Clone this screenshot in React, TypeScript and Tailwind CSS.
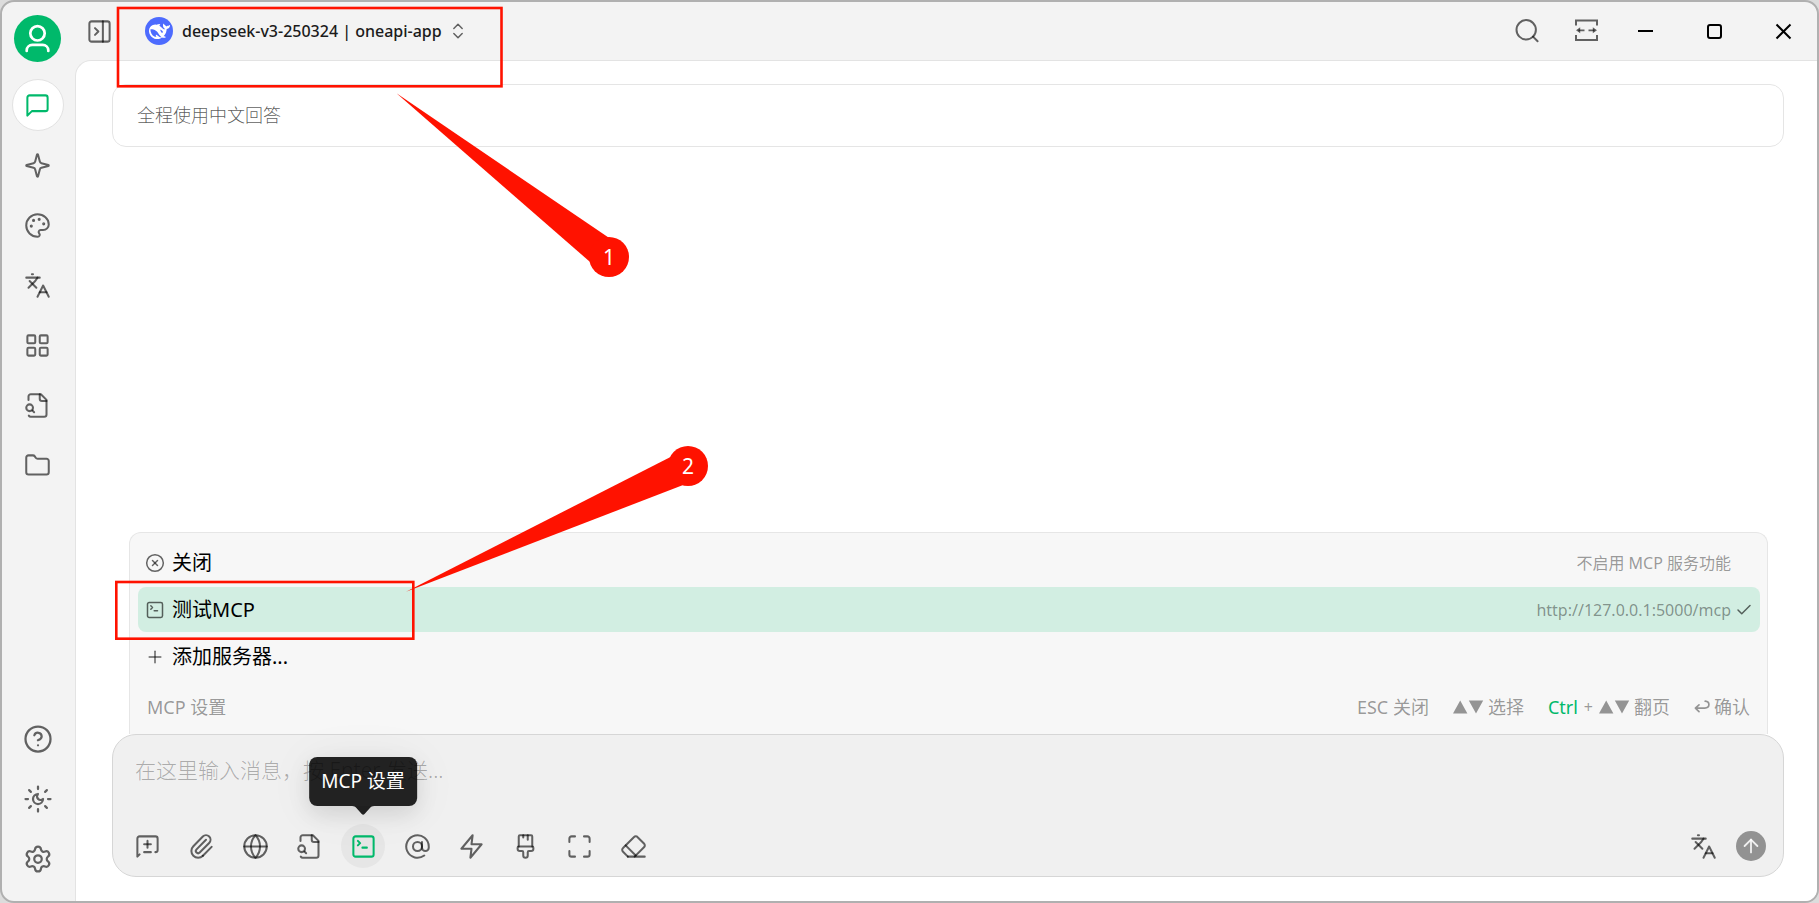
import React from "react";
import {
  ArrowUp,
  AtSign,
  Check,
  ChevronsUpDown,
  CircleHelp,
  CircleX,
  Folder,
  Globe,
  Languages,
  LayoutGrid,
  Maximize,
  Palette,
  Plus,
  Settings,
  SquareTerminal,
} from "lucide-react";

type IconProps = { size?: number; strokeWidth?: number; className?: string };
type IconType = React.ComponentType<IconProps>;

function Stroke({
  size = 24,
  strokeWidth = 2,
  className,
  children,
}: IconProps & { children: React.ReactNode }) {
  return (
    <svg
      width={size}
      height={size}
      viewBox="0 0 24 24"
      fill="none"
      stroke="currentColor"
      strokeWidth={strokeWidth}
      strokeLinecap="round"
      strokeLinejoin="round"
      className={className}
      aria-hidden="true"
    >
      {children}
    </svg>
  );
}

const ChatIcon: IconType = (p) => (
  <Stroke {...p}>
    <path d="M21 15a2 2 0 0 1-2 2H7l-4 4V5a2 2 0 0 1 2-2h14a2 2 0 0 1 2 2z" />
  </Stroke>
);

const SparkleIcon: IconType = (p) => (
  <Stroke {...p}>
    <path d="M9.937 15.5A2 2 0 0 0 8.5 14.063l-6.135-1.582a.5.5 0 0 1 0-.962L8.5 9.936A2 2 0 0 0 9.937 8.5l1.582-6.135a.5.5 0 0 1 .963 0L14.063 8.5A2 2 0 0 0 15.5 9.937l6.135 1.581a.5.5 0 0 1 0 .964L15.5 14.063a2 2 0 0 0-1.437 1.437l-1.582 6.135a.5.5 0 0 1-.963 0z" />
  </Stroke>
);

const SunMoonIcon: IconType = (p) => (
  <Stroke {...p}>
    <path d="M12 8a2.83 2.83 0 0 0 4 4 4 4 0 1 1-4-4" />
    <path d="M12 2v2M12 20v2M4.9 4.9l1.4 1.4M17.7 17.7l1.4 1.4M2 12h2M20 12h2M6.3 17.7l-1.4 1.4M19.1 4.9l-1.4 1.4" />
  </Stroke>
);

const EraserIcon: IconType = (p) => (
  <Stroke {...p}>
    <path d="m7 21-4.3-4.3c-1-1-1-2.5 0-3.4l9.6-9.6c1-1 2.5-1 3.4 0l5.6 5.6c1 1 1 2.5 0 3.4L13 21" />
    <path d="M22 21H7" />
    <path d="m5 11 9 9" />
  </Stroke>
);

const FileSearchIcon: IconType = (p) => (
  <Stroke {...p}>
    <path d="M14 2v4a2 2 0 0 0 2 2h4" />
    <path d="M4.268 21a2 2 0 0 0 1.727 1H18a2 2 0 0 0 2-2V7l-5-5H6a2 2 0 0 0-2 2v3" />
    <path d="m9 18-1.5-1.5" />
    <circle cx="5" cy="14" r="3" />
  </Stroke>
);

const NewTopicIcon: IconType = (p) => (
  <Stroke {...p}>
    <path d="m5 19-2 2V5a2 2 0 0 1 2-2h14a2 2 0 0 1 2 2v10a2 2 0 0 1-2 2" />
    <path d="M9 10h6" />
    <path d="M12 7v6" />
    <path d="M9 17h6" />
  </Stroke>
);

const ClipIcon: IconType = (p) => (
  <Stroke {...p}>
    <path d="M13.234 20.252 21 12.3" />
    <path d="m16 6-8.414 8.586a2 2 0 0 0 0 2.828 2 2 0 0 0 2.828 0l8.414-8.586a4 4 0 0 0 0-5.656 4 4 0 0 0-5.656 0l-8.415 8.585a6 6 0 1 0 8.486 8.486" />
  </Stroke>
);

const ZapIcon: IconType = (p) => (
  <Stroke {...p}>
    <path d="M13 2 3 14h9l-1 8 10-12h-9l1-8z" />
  </Stroke>
);

const BrushIcon: IconType = (p) => (
  <Stroke {...p}>
    <path d="M10 2v2" />
    <path d="M14 2v4" />
    <path d="M17 2a1 1 0 0 1 1 1v9H6V3a1 1 0 0 1 1-1z" />
    <path d="M6 12a1 1 0 0 0-1 1v1a2 2 0 0 0 2 2h2a1 1 0 0 1 1 1v2.9a2 2 0 1 0 4 0V17a1 1 0 0 1 1-1h2a2 2 0 0 0 2-2v-1a1 1 0 0 0-1-1" />
  </Stroke>
);

const SidebarToggleIcon: IconType = (p) => (
  <Stroke {...p}>
    <rect width="18" height="18" x="3" y="3" rx="2" />
    <path d="M15 3v18" />
    <path d="m8 9 3 3-3 3" />
  </Stroke>
);

function DeepSeekLogo() {
  return (
    <span className="flex size-7 items-center justify-center rounded-full bg-[#4d6bfe]">
      <svg width="21" height="21" viewBox="0 0 24 24" fill="#fff" aria-hidden="true">
        <path d="M23.748 4.482c-.254-.124-.364.113-.512.234-.051.039-.094.09-.137.136-.372.397-.806.657-1.373.626-.829-.046-1.537.214-2.163.848-.133-.782-.575-1.248-1.247-1.548-.352-.156-.708-.311-.955-.65-.172-.241-.219-.51-.305-.774-.055-.16-.11-.323-.293-.35-.2-.031-.278.136-.356.276-.313.572-.434 1.202-.422 1.84.027 1.436.633 2.58 1.838 3.393.137.093.172.187.129.323-.082.28-.18.552-.266.833-.055.179-.137.217-.329.14a5.526 5.526 0 01-1.736-1.18c-.857-.828-1.631-1.742-2.597-2.458a11.365 11.365 0 00-.689-.471c-.985-.957.13-1.743.388-1.836.27-.098.093-.432-.779-.428-.872.004-1.67.295-2.687.684a3.055 3.055 0 01-.465.137 9.597 9.597 0 00-2.883-.102c-1.885.21-3.39 1.102-4.497 2.623C.082 8.606-.231 10.684.152 12.85c.403 2.284 1.569 4.175 3.36 5.653 1.858 1.533 3.997 2.284 6.438 2.14 1.482-.085 3.133-.284 4.994-1.86.47.234.962.327 1.78.397.63.059 1.236-.03 1.705-.128.735-.156.684-.837.419-.961-2.155-1.004-1.682-.595-2.113-.926 1.096-1.296 2.746-2.642 3.392-7.003.05-.347.007-.565 0-.845-.004-.17.035-.237.23-.256a4.173 4.173 0 001.545-.475c1.396-.763 1.96-2.015 2.093-3.517.02-.23-.004-.467-.247-.588zM11.581 18c-2.089-1.642-3.102-2.183-3.52-2.16-.392.024-.321.471-.235.763.09.288.207.486.371.739.114.167.192.416-.113.603-.673.416-1.842-.14-1.897-.167-1.361-.802-2.5-1.86-3.301-3.307-.774-1.393-1.224-2.887-1.298-4.482-.02-.386.093-.522.477-.592a4.696 4.696 0 011.529-.039c2.132.312 3.946 1.265 5.468 2.774.868.86 1.525 1.887 2.202 2.891.72 1.066 1.494 2.082 2.48 2.914.348.292.625.514.891.677-.802.09-2.14.11-3.054-.614zm1-6.44a.306.306 0 01.415-.287.302.302 0 01.2.288.306.306 0 01-.31.307.303.303 0 01-.304-.308zm3.11 1.596c-.2.081-.399.151-.59.16a1.245 1.245 0 01-.798-.254c-.274-.23-.47-.358-.552-.758a1.73 1.73 0 01.016-.588c.07-.327-.008-.537-.239-.727-.187-.156-.426-.199-.688-.199a.559.559 0 01-.254-.078.253.253 0 01-.114-.358c.028-.054.16-.186.192-.21.356-.202.767-.136 1.146.016.352.144.618.408 1.001.782.391.451.462.576.685.914.176.265.336.537.445.848.067.195-.019.354-.25.452z" />
      </svg>
    </span>
  );
}

function SideButton({
  icon: Icon,
  label,
  size = 27,
  active = false,
}: {
  icon: IconType;
  label: string;
  size?: number;
  active?: boolean;
}) {
  return (
    <button
      type="button"
      aria-label={label}
      className={
        active
          ? "flex size-[52px] items-center justify-center rounded-full border border-[#e2e2e2] bg-white text-[#00b96b]"
          : "flex size-[52px] items-center justify-center rounded-full text-black/60"
      }
    >
      <Icon size={size} strokeWidth={1.8} />
    </button>
  );
}

function Sidebar() {
  return (
    <nav className="flex w-[73px] shrink-0 flex-col items-center justify-between pt-[13px] pr-[2px] pb-4">
      <div className="flex flex-col items-center gap-2">
        <button
          type="button"
          aria-label="用户"
          className="mb-[9px] flex size-[47px] items-center justify-center rounded-full bg-[#00b96b] text-white"
        >
          <svg width="47" height="47" viewBox="0 0 47 47" fill="none" stroke="currentColor" strokeWidth="2.7" strokeLinecap="round" aria-hidden="true">
            <circle cx="23.5" cy="18.3" r="7.2" />
            <path d="M12.7 36v-.8a5.6 5.6 0 0 1 5.6-5.4h10.4a5.6 5.6 0 0 1 5.6 5.4v.8" />
          </svg>
        </button>
        <SideButton icon={ChatIcon} label="助手" active />
        <SideButton icon={SparkleIcon} label="智能体" />
        <SideButton icon={Palette} label="绘画" />
        <SideButton icon={Languages} label="翻译" />
        <SideButton icon={LayoutGrid} label="小程序" />
        <SideButton icon={FileSearchIcon} label="知识库" />
        <SideButton icon={Folder} label="文件" />
      </div>
      <div className="flex flex-col items-center gap-2">
        <SideButton icon={CircleHelp} label="帮助" size={30} />
        <SideButton icon={SunMoonIcon} label="主题" size={30} />
        <SideButton icon={Settings} label="设置" size={30} />
      </div>
    </nav>
  );
}

function Header() {
  return (
    <header className="flex h-[58px] shrink-0 items-center">
      <button type="button" aria-label="显示侧边栏" className="ml-[11px] text-black/60">
        <SidebarToggleIcon size={27} strokeWidth={1.8} />
      </button>
      <button type="button" className="ml-8 flex items-center text-[#1b1b1b]">
        <DeepSeekLogo />
        <span className="mr-[6px] ml-[9px] text-[16px] leading-6 font-medium">deepseek-v3-250324 | oneapi-app</span>
        <ChevronsUpDown size={20} strokeWidth={1.8} className="text-black/60" />
      </button>
      <div className="-mr-px ml-auto flex items-center">
        <button type="button" aria-label="搜索" className="mr-[31px] text-black/60">
          <svg width="28" height="28" viewBox="0 0 28 28" fill="none" stroke="currentColor" strokeWidth="2" strokeLinecap="round" aria-hidden="true">
            <circle cx="13.2" cy="12.8" r="9.7" />
            <path d="m20 19.6 4.6 4.6" />
          </svg>
        </button>
        <button type="button" aria-label="展开宽度" className="mr-[11px] text-black/60">
          <svg width="28" height="28" viewBox="0 0 28 28" fill="none" stroke="currentColor" strokeWidth="2" aria-hidden="true">
            <path d="M4 8.5V3.5h21v5M4 18v5h21v-5" />
            <path d="M6.5 13.3h6M16.5 13.3h6" strokeWidth="1.8" />
            <path d="m4 13.3 4.2-3v6zM25 13.3l-4.2-3v6z" fill="currentColor" stroke="none" />
          </svg>
        </button>
        <button type="button" aria-label="最小化" className="flex h-[58px] w-[69px] items-center justify-center">
          <svg width="17" height="17" viewBox="0 0 17 17" stroke="#000" strokeWidth="2" aria-hidden="true">
            <path d="M1 8h15" />
          </svg>
        </button>
        <button type="button" aria-label="最大化" className="flex h-[58px] w-[69px] items-center justify-center">
          <svg width="17" height="17" viewBox="0 0 17 17" fill="none" stroke="#000" strokeWidth="2" aria-hidden="true">
            <rect x="2" y="2" width="13" height="13" rx="2" />
          </svg>
        </button>
        <button type="button" aria-label="关闭窗口" className="flex h-[58px] w-[69px] items-center justify-center">
          <svg width="17" height="17" viewBox="0 0 17 17" stroke="#000" strokeWidth="2" aria-hidden="true">
            <path d="m1.5 1.5 14 14M15.5 1.5l-14 14" />
          </svg>
        </button>
      </div>
    </header>
  );
}

function McpRow({
  icon: Icon,
  title,
  note,
  selected = false,
}: {
  icon: IconType;
  title: string;
  note?: string;
  selected?: boolean;
}) {
  return (
    <li>
      <button
        type="button"
        className={
          selected
            ? "flex h-[45px] w-full items-center rounded-lg bg-[#d2eee2] px-[7px]"
            : "flex h-[45px] w-full items-center rounded-lg px-[7px]"
        }
      >
        <Icon size={20} strokeWidth={1.8} className="shrink-0 text-black/60" />
        <span className="ml-[7px] text-[20px] leading-7 text-black">{title}</span>
        <span className="ml-auto text-[16px] leading-6 text-black/40">{note}</span>
        <span className="ml-1 flex w-[18px] justify-center text-black/60">
          {selected && <Check size={18} strokeWidth={2} />}
        </span>
      </button>
    </li>
  );
}

function Triangles() {
  return (
    <svg width="31" height="14" viewBox="0 0 31 14" fill="currentColor" aria-hidden="true">
      <path d="M0 13.5 7.2.5l7.2 13zM15.8.5h14.4L23 13.5z" />
    </svg>
  );
}

function ReturnIcon() {
  return (
    <svg width="16" height="14" viewBox="0 0 16 14" fill="none" stroke="currentColor" strokeWidth="1.7" strokeLinecap="round" strokeLinejoin="round" aria-hidden="true">
      <path d="M11.2 1.2c2.4.2 3.7 1.6 3.7 3.4 0 2.2-1.7 3.5-4.2 3.5H1.4M5 4.8 1.4 8.1 5 11.6" />
    </svg>
  );
}

function McpPanel() {
  return (
    <section aria-label="MCP 设置" className="mr-4 ml-[17px] rounded-t-xl border border-b-0 border-[#e6e6e6] bg-[#f7f7f7]">
      <ul className="flex flex-col gap-[2px] pt-[7px] pr-[7px] pl-2">
        <McpRow icon={CircleX} title="关闭" note="不启用 MCP 服务功能" />
        <McpRow icon={SquareTerminal} title="测试MCP" note="http://127.0.0.1:5000/mcp" selected />
        <McpRow icon={Plus} title="添加服务器..." />
      </ul>
      <div className="flex h-[55px] items-center justify-between px-[17px] text-[18px] leading-6 text-black/40">
        <span>MCP 设置</span>
        <div className="flex items-center gap-6">
          <span>ESC 关闭</span>
          <span className="flex items-center gap-1">
            <Triangles />
            选择
          </span>
          <span className="flex items-center gap-[6px]">
            <span className="text-[#00b96b]">Ctrl</span>
            <span className="text-[16px]">+</span>
            <span className="flex items-center gap-1">
              <Triangles />
              翻页
            </span>
          </span>
          <span className="flex items-center gap-1">
            <ReturnIcon />
            确认
          </span>
        </div>
      </div>
    </section>
  );
}

function ToolButton({ icon: Icon, label }: { icon: IconType; label: string }) {
  return (
    <button type="button" aria-label={label} className="flex size-11 items-center justify-center rounded-full text-black/60">
      <Icon size={27} strokeWidth={1.8} />
    </button>
  );
}

function Composer() {
  return (
    <section className="rounded-3xl border border-[#d6d6d6] bg-[#f0f0f0]">
      <textarea
        aria-label="消息"
        rows={1}
        placeholder="在这里输入消息，按 Enter 发送..."
        className="block h-[89px] w-full resize-none px-[22px] pt-[19px] text-[21px] leading-8 font-light outline-none placeholder:text-black/30"
      />
      <div className="flex items-center justify-between px-3 pb-2">
        <div className="flex items-center gap-[10px]">
          <ToolButton icon={NewTopicIcon} label="新话题" />
          <ToolButton icon={ClipIcon} label="上传附件" />
          <ToolButton icon={Globe} label="网络搜索" />
          <ToolButton icon={FileSearchIcon} label="知识库" />
          <div className="relative">
            <button
              type="button"
              aria-describedby="mcp-tip"
              aria-label="MCP 服务器"
              className="flex size-11 items-center justify-center rounded-full bg-[#e6e6e6] text-[#00b96b]"
            >
              <SquareTerminal size={27} strokeWidth={1.8} />
            </button>
            <div
              id="mcp-tip"
              role="tooltip"
              className="absolute bottom-[62px] left-1/2 -translate-x-1/2 rounded-lg bg-black/86 px-3 py-[10px] text-[19px] leading-[29px] whitespace-nowrap text-white shadow-[0_8px_22px_rgba(0,0,0,0.10),0_4px_50px_rgba(0,0,0,0.06)]"
            >
              MCP 设置
              <svg width="22" height="9" viewBox="0 0 22 9" className="absolute top-full left-1/2 -translate-x-1/2" aria-hidden="true">
                <path d="M0 0h22c-2 0-3 .8-4 1.8L12.4 8a2 2 0 0 1-2.8 0L4 1.8C3 .8 2 0 0 0z" fill="#000" fillOpacity=".86" />
              </svg>
            </div>
          </div>
          <ToolButton icon={AtSign} label="选择模型" />
          <ToolButton icon={ZapIcon} label="快捷短语" />
          <ToolButton icon={BrushIcon} label="清空消息" />
          <ToolButton icon={Maximize} label="展开" />
          <ToolButton icon={EraserIcon} label="清除上下文" />
        </div>
        <div className="flex items-center gap-[11px] pr-[5px]">
          <ToolButton icon={Languages} label="翻译" />
          <button type="button" aria-label="发送" className="flex size-[30px] items-center justify-center rounded-full bg-[#929292] text-white/85">
            <ArrowUp size={22} strokeWidth={2} />
          </button>
        </div>
      </div>
    </section>
  );
}

/* Numbered callouts drawn over the window. */
function Annotations() {
  return (
    <div className="pointer-events-none absolute inset-0">
      <svg className="absolute inset-0 size-full" aria-hidden="true">
        <g fill="none" stroke="#ff1200" strokeWidth="2.6">
          <rect x="118" y="8" width="383.5" height="78.3" />
          <rect x="116.3" y="582" width="297" height="56.7" />
        </g>
        <g fill="#ff1200">
          <path d="M396.5 93.3 608.5 237.5 608 257 589.5 261.5z" />
          <path d="M406 591.7 670.5 457 688 466 682.5 485.3z" />
        </g>
      </svg>
      <span className="absolute top-[237px] left-[589px] flex size-10 items-center justify-center rounded-full bg-[#ff1200] text-[21px] leading-none text-white">
        1
      </span>
      <span className="absolute top-[446px] left-[668px] flex size-10 items-center justify-center rounded-full bg-[#ff1200] text-[21px] leading-none text-white">
        2
      </span>
    </div>
  );
}

export default function App() {
  return (
    <div className="relative h-screen min-h-[860px] overflow-hidden bg-[#dcdcdc] font-['Noto_Sans','Noto_Sans_CJK_SC',sans-serif]">
      <div className="flex h-full overflow-hidden rounded-[14px] border-2 border-[#b0b0b0] bg-[#f3f3f3]">
        <Sidebar />
        <div className="flex min-w-0 flex-1 flex-col">
          <Header />
          <main className="flex min-h-0 flex-1 flex-col justify-between rounded-tl-2xl border-t border-l border-[#e3e3e3] bg-white pt-[23px] pr-[33px] pb-6 pl-9">
            <p className="rounded-[14px] border border-[#e5e5e5] px-6 py-[18px] text-[18px] leading-[25px] font-light text-black/65">
              全程使用中文回答
            </p>
            <div>
              <McpPanel />
              <Composer />
            </div>
          </main>
        </div>
      </div>
      <Annotations />
    </div>
  );
}
